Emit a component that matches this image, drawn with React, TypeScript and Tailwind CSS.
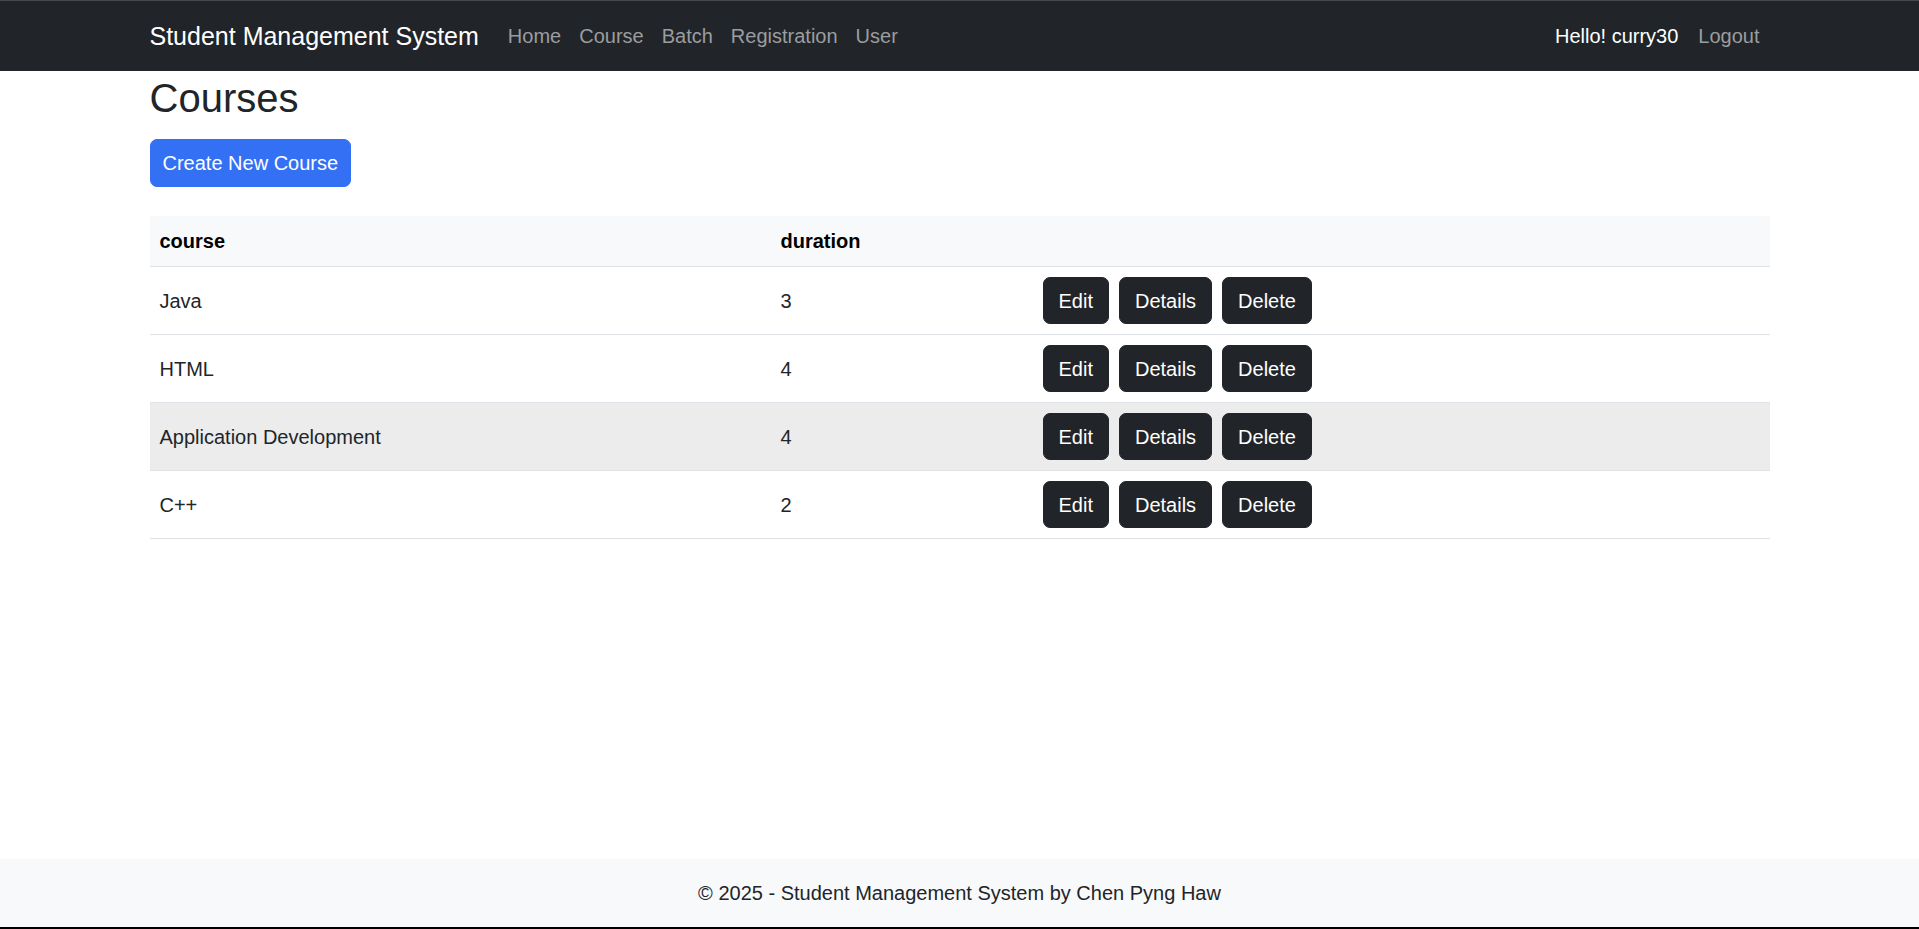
import React from "react";

type Course = {
  name: string;
  duration: number;
  hover?: boolean;
};

const courses: Course[] = [
  { name: "Java", duration: 3 },
  { name: "HTML", duration: 4 },
  { name: "Application Development", duration: 4, hover: true },
  { name: "C++", duration: 2 },
];

const navLinks = ["Home", "Course", "Batch", "Registration", "User"];

function ActionButton({ label }: { label: string }) {
  return (
    <button className="rounded-[7px] border border-[#212529] bg-[#212529] px-[15px] py-[7.5px] text-[20px] leading-[30px] text-white">
      {label}
    </button>
  );
}

export default function App() {
  return (
    <div className="flex min-h-screen flex-col bg-white font-['Liberation_Sans',Arial,sans-serif] text-[20px] leading-[30px] text-[#212529]">
      {/* navbar */}
      <nav className="h-[71px] border-t border-[#46494c] bg-[#212529]">
        <div className="mx-auto flex h-full w-[1650px] items-center px-[15px]">
          <span className="mr-[20px] text-[25px] leading-[37px] text-white">
            Student Management System
          </span>
          <ul className="flex items-center">
            {navLinks.map((link) => (
              <li key={link} className="px-[9px] text-[#9b9d9f]">
                {link}
              </li>
            ))}
          </ul>
          <ul className="ml-auto flex items-center">
            <li className="px-[10px] text-white">Hello! curry30</li>
            <li className="px-[10px] text-[#9b9d9f]">Logout</li>
          </ul>
        </div>
      </nav>

      {/* main content */}
      <main className="mx-auto w-[1650px] px-[15px] pt-[3px]">
        <h2 className="mb-[17px] text-[40px] font-medium leading-[48px]">
          Courses
        </h2>
        <button className="rounded-[7px] border border-[#3470f4] bg-[#3470f4] px-[12px] py-[8px] text-[20px] leading-[30px] text-white">
          Create New Course
        </button>

        <table className="mt-[29px] w-full border-collapse text-left">
          <thead>
            <tr className="border-b border-[#dee2e6] bg-[#f8f9fa]">
              <th className="w-[621px] px-[10px] py-[10px] font-bold text-black">
                course
              </th>
              <th className="w-[262px] px-[10px] py-[10px] font-bold text-black">
                duration
              </th>
              <th className="px-[10px] py-[10px]"></th>
            </tr>
          </thead>
          <tbody>
            {courses.map((c) => (
              <tr
                key={c.name}
                className={
                  c.hover
                    ? "border-b border-[#dee2e6] bg-[#ececec]"
                    : "border-b border-[#dee2e6]"
                }
              >
                <td className="px-[10px] py-[10px] align-middle">{c.name}</td>
                <td className="px-[10px] py-[10px] align-middle">
                  {c.duration}
                </td>
                <td className="px-[10px] py-[10px] align-middle">
                  <div className="flex gap-[10px]">
                    <ActionButton label="Edit" />
                    <ActionButton label="Details" />
                    <ActionButton label="Delete" />
                  </div>
                </td>
              </tr>
            ))}
          </tbody>
        </table>
      </main>

      {/* footer */}
      <footer className="mt-auto flex h-[70px] items-center justify-center border-b-2 border-black bg-[#f8f9fa]">
        © 2025 - Student Management System by Chen Pyng Haw
      </footer>
    </div>
  );
}
